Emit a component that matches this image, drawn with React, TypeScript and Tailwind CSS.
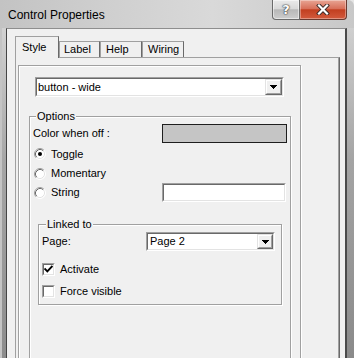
import React from "react";

function Sunken({ className = "", children }: { className?: string; children?: React.ReactNode }) {
  return (
    <div className={`border border-t-[#a0a0a0] border-l-[#a0a0a0] border-r-white border-b-white ${className}`}>
      <div className="h-full w-full border border-t-[#696969] border-l-[#696969] border-r-[#e3e3e3] border-b-[#e3e3e3] bg-white flex items-center">
        {children}
      </div>
    </div>
  );
}

function DropBtn({ w = "w-[17px]" }: { w?: string }) {
  return (
    <div className={`ml-auto h-full ${w} border border-t-[#e3e3e3] border-l-[#e3e3e3] border-r-[#696969] border-b-[#696969] bg-[#f0f0f0]`}>
      <div className="h-full w-full border border-t-white border-l-white border-r-[#a0a0a0] border-b-[#a0a0a0] flex items-center justify-center">
        <svg width="7" height="4" viewBox="0 0 7 4" shapeRendering="crispEdges">
          <path d="M0 0h7v1h-1v1h-1v1h-1v1h-1v-1h-1v-1h-1v-1h-1z" fill="#000" />
        </svg>
      </div>
    </div>
  );
}

function Radio({ checked = false }: { checked?: boolean }) {
  return (
    <svg width="12" height="12" viewBox="0 0 12 12" className="shrink-0">
      <circle cx="6" cy="6" r="5" fill="#fff" />
      <path d="M2.11 9.89A5.5 5.5 0 0 1 9.89 2.11" stroke="#a0a0a0" fill="none" />
      <path d="M9.89 2.11A5.5 5.5 0 0 1 2.11 9.89" stroke="#ffffff" fill="none" />
      <path d="M2.82 9.18A4.5 4.5 0 0 1 9.18 2.82" stroke="#696969" fill="none" />
      <path d="M9.18 2.82A4.5 4.5 0 0 1 2.82 9.18" stroke="#e3e3e3" fill="none" />
      {checked && <circle cx="6" cy="6" r="2" fill="#000" />}
    </svg>
  );
}

function Check({ checked = false }: { checked?: boolean }) {
  return (
    <div className="w-[13px] h-[13px] shrink-0 border border-t-[#a0a0a0] border-l-[#a0a0a0] border-r-white border-b-white">
      <div className="h-full w-full border border-t-[#696969] border-l-[#696969] border-r-[#e3e3e3] border-b-[#e3e3e3] bg-white flex items-center justify-center">
        {checked && (
          <svg width="9" height="9" viewBox="0 0 9 9">
            <path d="M1.2 4.2L3.3 6.3L7.8 1.6" stroke="#000" strokeWidth="1.9" fill="none" strokeLinecap="square" />
          </svg>
        )}
      </div>
    </div>
  );
}

export default function App() {
  return (
    <div className="w-[354px] h-[358px] overflow-hidden bg-[#e6e6e6] font-['Liberation_Sans',Arial,sans-serif] text-[11px] leading-[13px] text-black">
      <div className="flex flex-col w-full h-full rounded-tr-[6px] overflow-hidden bg-[linear-gradient(to_right,#c3c3c3,#cfcfcf_30%,#d9d9d9_60%,#c8c8c8)]">
        {/* title bar */}
        <div className="h-[28px] flex items-start shrink-0">
          <div className="ml-[8px] mt-[8px] text-[12px] leading-[14px] text-black">Control Properties</div>
          <div className="ml-auto mr-[7px] flex">
            <div className="w-[28px] h-[20px] border border-[#6a6a6a] border-t-0 rounded-bl-[4px] bg-[linear-gradient(to_bottom,#eaeaea,#d9d9d9_45%,#b8b8b8_52%,#cdcdcd)] flex items-center justify-center shadow-[inset_0_0_0_1px_rgba(255,255,255,0.5)]">
              <span className="font-['DejaVu_Sans',sans-serif] font-bold text-[13px] leading-[13px] text-white [text-shadow:0_0_1px_#333,0_0_1px_#333,0_0_2px_#555]">?</span>
            </div>
            <div className="w-[47px] h-[20px] border border-[#6a3a30] border-t-0 border-l-0 rounded-br-[4px] bg-[linear-gradient(to_bottom,#e8a594,#d8705a_45%,#c23f20_52%,#d35a3d)] flex items-center justify-center shadow-[inset_0_0_0_1px_rgba(255,255,255,0.35)]">
              <svg width="14" height="11" viewBox="0 0 14 11">
                <path d="M3 1.5L11 9.5M11 1.5L3 9.5" stroke="#3a2a28" strokeWidth="4" strokeLinecap="square" />
                <path d="M3 1.5L11 9.5M11 1.5L3 9.5" stroke="#fff" strokeWidth="2.2" strokeLinecap="square" />
              </svg>
            </div>
          </div>
        </div>

        {/* body */}
        <div className="flex flex-1 min-h-0">
          <div className="w-[6px] bg-[linear-gradient(to_bottom,#d2d2d2,#a6a6a6_40%,#8c8c8c)] border-l-2 border-l-[#c4c4c4]" />
          <div className="w-[341px] bg-[#f0f0f0] border-t border-t-[#8e8e8e] border-l border-l-[#454545] border-r-2 border-r-[#4a4a4a] pl-[8px] pt-[7px] flex flex-col">
            {/* tabs */}
            <div className="flex items-end h-[21px] shrink-0">
              <div className="relative z-10 -mb-px w-[44px] h-[22px] bg-[#f0f0f0] border-l border-t border-l-[#a0a0a0] border-t-[#a0a0a0] border-r border-r-[#696969] pl-[6px] pt-[4px]">Style</div>
              <div className="w-[41px] h-[16px] border-l border-t border-l-[#a0a0a0] border-t-[#a0a0a0] border-r border-r-[#696969] pl-[4px] pt-[1px]">Label</div>
              <div className="w-[42px] h-[16px] border-l border-t border-l-[#a0a0a0] border-t-[#a0a0a0] border-r border-r-[#696969] pl-[5px] pt-[1px]">Help</div>
              <div className="w-[42px] h-[16px] border-l border-t border-l-[#a0a0a0] border-t-[#a0a0a0] border-r border-r-[#696969] pl-[5px] pt-[1px]">Wiring</div>
            </div>
            {/* tab page */}
            <div className="w-[325px] h-[400px] shrink-0 border-t border-l border-t-[#a0a0a0] border-l-[#a0a0a0] border-r border-r-[#696969] shadow-[inset_-1px_0_0_#a0a0a0] pl-[2px] pt-[7px]">
              {/* inner panel */}
              <div className="w-[283px] h-[380px] border border-[#a0a0a0] shadow-[inset_1px_1px_0_#fff,1px_1px_0_#fff] flex flex-col">
                <Sunken className="ml-[16px] mt-[11px] w-[249px] h-[20px] shrink-0">
                  <span className="pl-[1px]">button - wide</span>
                  <DropBtn />
                </Sunken>

                {/* Options group */}
                <div className="ml-[10px] mt-[19px] w-[262px] h-[320px] shrink-0 border border-[#a0a0a0] shadow-[inset_1px_1px_0_#fff,1px_1px_0_#fff] flex flex-col">
                  <span className="-mt-[7px] ml-[6px] px-[1px] w-fit bg-[#f0f0f0] leading-[13px] h-[13px]">Options</span>
                  <div className="mt-[1px] h-[19px] flex items-center pl-[3px]">
                    <span>Color when off :</span>
                    <div className="ml-auto mr-[3px] w-[125px] h-[19px] border border-[#1e1e1e] bg-[#c5c5c5]" />
                  </div>
                  <div className="mt-[1px] h-[20px] flex items-center pl-[4px] gap-[5px]">
                    <Radio checked />
                    <span>Toggle</span>
                  </div>
                  <div className="h-[19px] flex items-center pl-[4px] gap-[5px]">
                    <Radio />
                    <span>Momentary</span>
                  </div>
                  <div className="h-[19px] flex items-center pl-[4px] gap-[5px]">
                    <Radio />
                    <span>String</span>
                    <Sunken className="ml-auto mr-[4px] w-[124px] h-[19px]" />
                  </div>

                  {/* Linked to group */}
                  <div className="ml-[8px] mt-[22px] w-[244px] h-[81px] shrink-0 border border-[#a0a0a0] shadow-[inset_1px_1px_0_#fff,1px_1px_0_#fff] flex flex-col">
                    <span className="-mt-[7px] ml-[7px] px-[1px] w-fit bg-[#f0f0f0] leading-[13px] h-[13px]">Linked to</span>
                    <div className="mt-[1px] h-[19px] flex items-center pl-[3px]">
                      <span>Page:</span>
                      <Sunken className="ml-auto mr-[6px] w-[129px] h-[19px]">
                        <span className="pl-[2px]">Page 2</span>
                        <DropBtn w="w-[16px]" />
                      </Sunken>
                    </div>
                    <div className="mt-[12px] h-[13px] flex items-center pl-[3px] gap-[5px]">
                      <Check checked />
                      <span>Activate</span>
                    </div>
                    <div className="mt-[9px] h-[13px] flex items-center pl-[3px] gap-[5px]">
                      <Check />
                      <span>Force visible</span>
                    </div>
                  </div>
                </div>
              </div>
            </div>
          </div>
          <div className="w-[7px] bg-[linear-gradient(to_bottom,#cfcfcf,#a4a4a4_40%,#8a8a8a)]" />
        </div>
      </div>
    </div>
  );
}
